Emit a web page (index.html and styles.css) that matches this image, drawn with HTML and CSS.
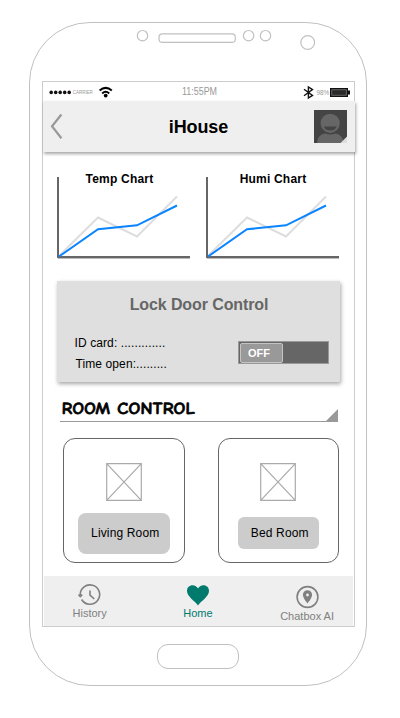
FILE: index.html
```html
<!DOCTYPE html>
<html lang="en">
<head>
<meta charset="utf-8">
<title>iHouse</title>
<link rel="stylesheet" href="styles.css">
</head>
<body>
<div class="phone">
  <svg class="sensors" width="336" height="58" viewBox="30 23 336 58" fill="none" stroke="#c0c0c0" stroke-width="1.2">
    <circle cx="142.5" cy="35.7" r="5.2"/>
    <rect x="159" y="33.8" width="76.3" height="8.6" rx="3.5"/>
    <circle cx="248.6" cy="35.7" r="5.2"/>
    <circle cx="265.5" cy="35.7" r="5.2"/>
    <circle cx="307.7" cy="42.5" r="6.9"/>
  </svg>
  <main class="screen">
    <div class="status">
      <svg width="311" height="19" viewBox="43 82 311 19">
        <g fill="#111"><circle cx="51.2" cy="92.4" r="1.8"/><circle cx="55.7" cy="92.4" r="1.8"/><circle cx="60.2" cy="92.4" r="1.8"/><circle cx="64.7" cy="92.4" r="1.8"/><circle cx="69.2" cy="92.4" r="1.8"/></g>
        <text class="tiny" x="72.8" y="94" font-size="5" textLength="20" lengthAdjust="spacingAndGlyphs">CARRIER</text>
        <g fill="none" stroke="#000" stroke-width="2"><path d="M99.6 90.6Q105.7 85.2 111.8 90.6M102.2 93.4Q105.7 90.2 109.2 93.4"/></g>
        <circle cx="105.7" cy="95.6" r="1.9"/>
        <text class="clock" x="182" y="95" textLength="35" lengthAdjust="spacingAndGlyphs">11:55PM</text>
        <path d="M304 89.2L312.5 95.4L308.4 98V87L312.5 89.6L304 95.8" fill="none" stroke="#111" stroke-width="1.4"/>
        <text class="tiny" x="316.5" y="94.9" font-size="7" textLength="12.8" lengthAdjust="spacingAndGlyphs">98%</text>
        <path d="M330 88h18v2.5h2v4h-2V97h-18z" fill="#111"/>
        <path d="M331.7 89.7h14.7v5.6h-14.7z" fill="#2a2a2a" stroke="#999" stroke-width=".6"/>
      </svg>
    </div>
    <header class="topbar">
      <svg class="back" width="14" height="27" viewBox="0 0 14 27"><path d="M12.4 1.5L3 13.3L12.4 25.3" fill="none" stroke="#999" stroke-width="2.2"/></svg>
      <h1>iHouse</h1>
      <svg class="avatar" width="33" height="33" viewBox="0 0 33 33">
        <path d="M0 0h33v33H0z" fill="#444"/>
        <circle cx="16.2" cy="13.3" r="9.6" fill="#666"/>
        <path d="M9.8 16.5h12.8q-1.2 4-6.4 4T9.8 16.5z" fill="#444"/>
        <path d="M3 33q.5-8.500 8-9.500q5.200 2.200 10.400 0q7.500 1 8 9.500z" fill="#666"/>
        <path d="M33 26.5V33h-6.5z" fill="#ddd"/>
      </svg>
    </header>
    <section class="charts">
      <figure class="chart">
        <figcaption>Temp Chart</figcaption>
        <svg width="134" height="83" viewBox="0 0 134 83" fill="none" stroke-width="2">
          <path d="M1 81.5H133" stroke="#bbb" stroke-width="1"/>
          <path d="M2 79L41 40.5L80 59.5L120 19.5" stroke="#ddd"/>
          <path d="M1 0V80H133" stroke="#666"/>
          <path d="M2 79.5L41 52.3L80 48.3L120 28.5" stroke="#0a84ff"/>
        </svg>
      </figure>
      <figure class="chart humi">
        <figcaption>Humi Chart</figcaption>
        <svg width="134" height="83" viewBox="0 0 134 83" fill="none" stroke-width="2">
          <path d="M1 81.5H133" stroke="#bbb" stroke-width="1"/>
          <path d="M2 79L41 40.5L80 59.5L120 19.5" stroke="#ddd"/>
          <path d="M1 0V80H133" stroke="#666"/>
          <path d="M2 79.5L41 52.3L80 48.3L120 28.5" stroke="#0a84ff"/>
        </svg>
      </figure>
    </section>
    <section class="lock">
      <h2>Lock Door Control</h2>
      <div class="lock-row">
        <div class="lock-info">
          <p>ID card: .............</p>
          <p class="open">Time open:.........</p>
        </div>
        <div class="toggle"><span class="knob">OFF</span></div>
      </div>
    </section>
    <div class="section-title">
      <svg width="279" height="24" viewBox="0 0 279 24">
        <g class="comic" transform="translate(1.5 16.4) skewX(-1)">
          <text x="0" y="0" textLength="48.5" lengthAdjust="spacingAndGlyphs">ROOM</text>
          <text x="55.5" y="0" textLength="78" lengthAdjust="spacingAndGlyphs">CONTROL</text>
        </g>
        <path d="M0 23.5H278" stroke="#999" stroke-width="1.2"/>
        <path d="M278 11V24H265z" fill="#999"/>
      </svg>
    </div>
    <section class="rooms">
      <article class="room">
        <svg width="36" height="38" viewBox="0 0 36 38" fill="none" stroke="#aaa" stroke-width="1.2"><path d="M.7.7h34.6v36.6H.7zL35.3 37.3M35.3.7L.7 37.3"/></svg>
        <span class="label">Living Room</span>
      </article>
      <article class="room">
        <svg width="36" height="38" viewBox="0 0 36 38" fill="none" stroke="#aaa" stroke-width="1.2"><path d="M.7.7h34.6v36.6H.7zL35.3 37.3M35.3.7L.7 37.3"/></svg>
        <span class="label small">Bed Room</span>
      </article>
    </section>
    <nav class="tabs">
      <div class="tab history">
        <svg width="24" height="22" viewBox="0 0 24 22" fill="none" stroke="#808080" stroke-width="1.6"><path d="M2.3 11.5A9.7 9.7 0 1 1 3.6 15.5"/><path d="M.6 10.6L2.3 12.6L4.2 10.6"/><path d="M12 6.5v4.7l4.3 3.8"/></svg>
        <span>History</span>
      </div>
      <div class="tab home">
        <svg width="24" height="22" viewBox="0 0 24 22"><path d="M12 21.5C9 17 1 12.5 1 7C1 3.5 3.5 1.3 6.5 1.3C9 1.3 11 2.6 12 4.5C13 2.6 15 1.3 17.5 1.3C20.5 1.3 23 3.5 23 7C23 12.5 15 17 12 21.5z" fill="#007a6c"/></svg>
        <span>Home</span>
      </div>
      <div class="tab chat">
        <svg width="24" height="24" viewBox="0 0 24 24"><circle cx="12.5" cy="12" r="10.4" fill="none" stroke="#808080" stroke-width="1.6"/><path transform="translate(.5 0)" fill="#808080" fill-rule="evenodd" d="M12 5.2a4.6 4.6 0 0 0-4.6 4.6C7.400 13.200 12 18.500 12 18.500S16.600 13.200 16.600 9.800A4.600 4.600 0 0 0 12 5.200zM12 8.600a1.400 1.400 0 1 1 0 2.800a1.400 1.400 0 0 1 0-2.800z"/></svg>
        <span>Chatbox AI</span>
      </div>
    </nav>
  </main>
  <div class="home-button"></div>
</div>
</body>
</html>
```
FILE: styles.css
```css
* { box-sizing: border-box; margin: 0; padding: 0; }
body { background: #fff; font: 12px/14px "Liberation Sans", Arial, sans-serif; color: #000; }
svg { display: block; flex: none; }
.phone {
  width: 338px;
  height: 664px;
  margin: 22px 0 0 29px;
  border: 1px solid #c0c0c0;
  border-radius: 61px;
}
.screen {
  width: 313px;
  height: 546px;
  margin-left: 12px;
  border: 1px solid #ccc;
  display: flex;
  flex-direction: column;
}
.status { height: 19px; }
.tiny { fill: #999; }
.clock { fill: #999; font-size: 10px; }
.topbar {
  height: 51px;
  margin-right: -1px;
  padding: 0 8px 0 6px;
  display: flex;
  align-items: center;
  justify-content: space-between;
  background: #efefef;
  box-shadow: 1px 2px 3px rgba(0, 0, 0, .35);
}
.topbar h1 { font-size: 18px; line-height: 22px; margin-left: 20px; letter-spacing: -.1px; }
.charts { display: flex; gap: 15px; padding: 20px 0 0 14px; height: 129px; }
.chart { width: 134px; }
.chart figcaption {
  height: 5px;
  margin-right: 9px;
  text-align: center;
  font-weight: bold;
  letter-spacing: .2px;
}
.chart.humi figcaption { margin-right: 0; }
.lock {
  width: 283px;
  height: 101px;
  margin-left: 14px;
  padding-top: 14px;
  background: #dfdfdf;
  box-shadow: 1px 2px 4px rgba(0, 0, 0, .35);
}
.lock h2 { font-size: 16px; line-height: 20px; text-align: center; color: #666; letter-spacing: -.1px; padding-left: 1px; }
.lock-row { display: flex; justify-content: space-between; padding: 21px 11px 0 17.5px; }
.lock-info { letter-spacing: .1px; }
.lock-info .open { margin: 7px 0 0 1px; }
.toggle {
  width: 91px;
  height: 23px;
  margin-top: 5px;
  padding: 1px;
  background: #666;
  border: 1px solid #999;
  display: flex;
}
.knob {
  width: 43px;
  height: 20px;
  border: 1px solid #c4c4c4;
  border-radius: 2px;
  background: #999;
  color: #fff;
  font-weight: bold;
  font-size: 11px;
  line-height: 19px;
  padding-left: 7px;
}
.section-title { margin: 16px 0 0 17px; }
.comic {
  font: 700 17px "Comic Sans MS", "Comic Neue", "Open Sans", sans-serif;
  stroke: #000;
  stroke-width: .6px;
}
.rooms { display: flex; gap: 33px; padding: 16px 0 0 20px; }
.room {
  width: 121.5px;
  height: 125px;
  padding-top: 24px;
  border: 1px solid #666;
  border-radius: 12px;
  display: flex;
  flex-direction: column;
  align-items: center;
}
.label {
  width: 92px;
  height: 41px;
  margin-top: 12px;
  padding-left: 3px;
  border-radius: 8px;
  background: #ccc;
  line-height: 40px;
  text-align: center;
  letter-spacing: .15px;
}
.label.small { width: 81px; height: 32px; margin-top: 16px; border-radius: 6px; line-height: 32px; }
.tabs {
  height: 50px;
  margin: auto 1px 0 1px;
  padding: 0 19px 0 28.5px;
  background: #efefef;
  display: flex;
  justify-content: space-between;
  font-size: 11px;
  line-height: 13px;
  color: #808080;
}
.tab { display: flex; flex-direction: column; align-items: center; padding-top: 8px; }
.tab span { margin-top: 1px; }
.tab.home { color: #007a6c; margin-left: 9px; }
.tab.chat { padding-top: 9px; }
.home-button {
  width: 82px;
  height: 25px;
  margin: 17px 0 0 127px;
  border: 1px solid #c0c0c0;
  border-radius: 11px;
}
```
